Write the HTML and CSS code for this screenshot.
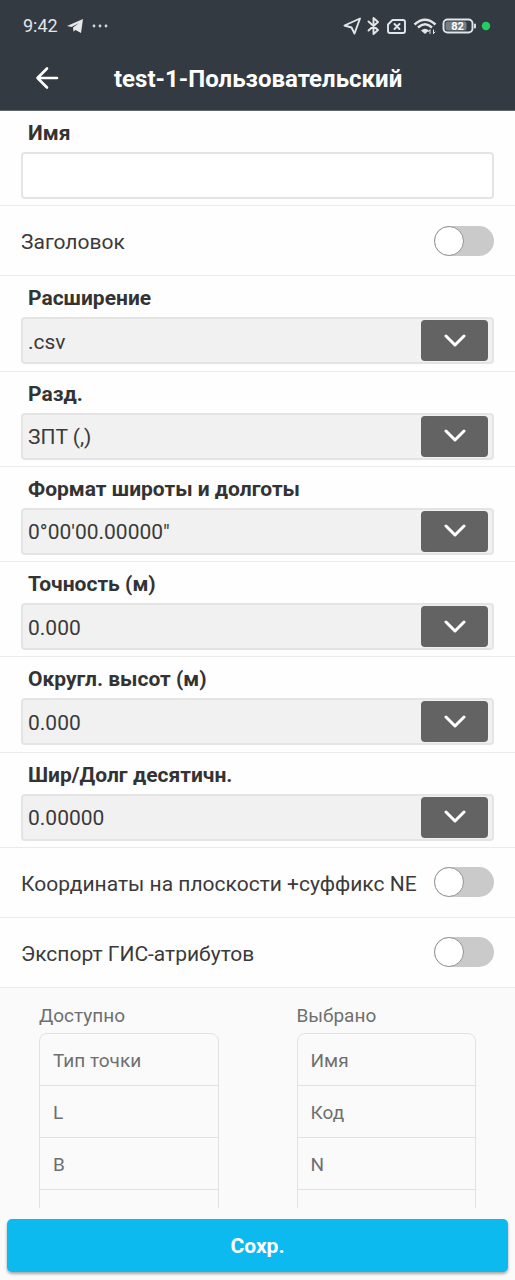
FILE: index.html
```html
<!DOCTYPE html>
<html lang="ru">
<head>
<meta charset="utf-8">
<meta name="viewport" content="width=device-width, initial-scale=1">
<title>test-1-Пользовательский</title>
<link rel="stylesheet" href="styles.css">
</head>
<body>
<div class="page">
  <header class="header">
    <div class="status">
      <div class="status-group">
        <span class="time">9:42</span>
        <svg width="16" height="14" viewBox="0 0 16 14"><path d="M0 7 16 0 14 14 8.500 11 6.500 12.500 6 8.500 12 4 4.500 8Z" fill="#e6e8ea"/></svg>
        <svg width="16" height="4" viewBox="0 0 16 4" fill="#d5d8dc"><circle cx="2" cy="2" r="1.400"/><circle cx="8" cy="2" r="1.400"/><circle cx="14" cy="2" r="1.400"/></svg>
      </div>
      <svg class="status-icons" width="148" height="20" viewBox="0 0 148 20" fill="none" stroke="#e3e6e9" stroke-width="1.900" stroke-linejoin="round" stroke-linecap="round">
        <path d="M1.500 9.500 17 2.500 11.500 17.500 8.500 11.500Z"/>
        <path d="M25.500 5.500 35 14 30.500 18V2l4.500 4-9.500 8.500"/>
        <path d="M49.500 4h10.500q2 0 2 2v9q0 2-2 2H47q-2 0-2-2V8.500Z"/>
        <path d="m51.500 8 5 5m0-5-5 5"/>
        <g stroke-width="2.400" stroke-linecap="butt"><path d="M71.500 8.500Q82-1 92.500 8.500M75 11.500q7-6.500 14 0"/></g>
        <path d="M78 14.500q4-3.500 8 0l-4 3.500Z" fill="#e3e6e9" stroke="none"/>
        <path d="M87 17.500v-3.500m-1.500 1.500 1.500-1.500M90.500 14v3.500m1.500-1.500-1.500 1.500" stroke-width="1"/>
        <rect x="100.500" y="3.500" width="29" height="13" rx="4"/>
        <rect x="102.500" y="5.500" width="21" height="9" rx="2" fill="#777d84" stroke="none"/>
        <path d="M132 8.500v3"/>
        <text x="114.500" y="14" text-anchor="middle" class="battery-text">82</text>
        <circle cx="143" cy="10" r="4.200" fill="#22cf62" stroke="none"/>
      </svg>
    </div>
    <div class="appbar">
      <button class="back" type="button" aria-label="Назад">
        <svg width="24" height="24" viewBox="0 0 24 24" fill="none" stroke="#fff" stroke-width="2.600" stroke-linecap="round" stroke-linejoin="round"><path d="M22 12H2.500M12 2.500 2.500 12l9.500 9.500"/></svg>
      </button>
      <h1 class="title">test-1-Пользовательский</h1>
    </div>
  </header>

  <form class="form" id="format">
    <div class="field">
      <label class="label" for="name">Имя</label>
      <input class="control" id="name" type="text">
    </div>
    <div class="toggle-row">
      <label for="header">Заголовок</label>
      <input class="switch" id="header" type="checkbox" role="switch">
    </div>
    <div class="field">
      <label class="label" for="ext">Расширение</label>
      <div class="picker"><select class="control" id="ext"><option>.csv</option></select><span class="arrow"><svg width="22" height="14" viewBox="0 0 22 14"><path d="m2 2 9 9 9-9"/></svg></span></div>
    </div>
    <div class="field">
      <label class="label" for="sep">Разд.</label>
      <div class="picker"><select class="control" id="sep"><option>ЗПТ (,)</option></select><span class="arrow"><svg width="22" height="14" viewBox="0 0 22 14"><path d="m2 2 9 9 9-9"/></svg></span></div>
    </div>
    <div class="field">
      <label class="label" for="angle">Формат широты и долготы</label>
      <div class="picker"><select class="control" id="angle"><option>0°00'00.00000"</option></select><span class="arrow"><svg width="22" height="14" viewBox="0 0 22 14"><path d="m2 2 9 9 9-9"/></svg></span></div>
    </div>
    <div class="field">
      <label class="label" for="precision">Точность (м)</label>
      <div class="picker"><select class="control" id="precision"><option>0.000</option></select><span class="arrow"><svg width="22" height="14" viewBox="0 0 22 14"><path d="m2 2 9 9 9-9"/></svg></span></div>
    </div>
    <div class="field">
      <label class="label" for="height">Округл. высот (м)</label>
      <div class="picker"><select class="control" id="height"><option>0.000</option></select><span class="arrow"><svg width="22" height="14" viewBox="0 0 22 14"><path d="m2 2 9 9 9-9"/></svg></span></div>
    </div>
    <div class="field">
      <label class="label" for="decimal">Шир/Долг десятичн.</label>
      <div class="picker"><select class="control" id="decimal"><option>0.00000</option></select><span class="arrow"><svg width="22" height="14" viewBox="0 0 22 14"><path d="m2 2 9 9 9-9"/></svg></span></div>
    </div>
    <div class="toggle-row">
      <label for="suffix">Координаты на плоскости +суффикс NE</label>
      <input class="switch" id="suffix" type="checkbox" role="switch">
    </div>
    <div class="toggle-row">
      <label for="gis">Экспорт ГИС-атрибутов</label>
      <input class="switch" id="gis" type="checkbox" role="switch">
    </div>
  </form>

  <div class="lists">
    <section class="column">
      <h2 class="column-title">Доступно</h2>
      <ul class="items"><li>Тип точки</li><li>L</li><li>B</li><li></li></ul>
    </section>
    <section class="column">
      <h2 class="column-title">Выбрано</h2>
      <ul class="items"><li>Имя</li><li>Код</li><li>N</li><li></li></ul>
    </section>
  </div>

  <footer class="footer">
    <button class="save" type="submit" form="format">Сохр.</button>
  </footer>
</div>
</body>
</html>
```
FILE: styles.css
```css
*,
*::before { box-sizing: border-box; }

body {
  margin: 0;
  background: #fafafa;
  color: #3a3a3a;
  font: 21px/24px Roboto, "Noto Sans", sans-serif;
}

.page {
  display: flex;
  flex-direction: column;
  min-height: 100vh;
}

.header {
  background: #343a42;
  border-bottom: 1px solid #62676e;
  color: #fff;
}

.status {
  display: flex;
  align-items: center;
  justify-content: space-between;
  height: 52px;
  padding: 0 23px;
}

.status-icons { margin-right: 1px; }

.status-group {
  display: flex;
  align-items: center;
  gap: 9px;
}

.time {
  color: #e3e6e9;
  font-size: 18px;
}

.battery-text {
  fill: #fff;
  stroke: none;
  font-size: 11px;
  font-weight: 700;
}

.appbar {
  display: flex;
  align-items: center;
  gap: 55px;
  height: 58px;
  padding: 0 35px 6px;
}

.back {
  display: flex;
  padding: 0;
  border: 0;
  background: none;
}

.title {
  margin: 0;
  padding-top: 2px;
  font-size: 24px;
  font-weight: 700;
}

.form {
  display: flex;
  flex: 1;
  flex-direction: column;
  background: #fefefe;
}

.field {
  display: flex;
  flex: 1 0 auto;
  flex-direction: column;
  padding: 10px 21px 6px;
  border-bottom: 1px solid #ebebeb;
}

.label {
  margin-bottom: 7px;
  padding-left: 7px;
  color: #333;
  font-weight: 700;
}

.control {
  width: 100%;
  height: 47px;
  padding: 2px 6px 0;
  border: 2px solid #e4e4e4;
  border-radius: 4px;
  background: #fff;
  color: inherit;
  font: inherit;
  appearance: none;
}

.picker { display: grid; }

.picker .control,
.arrow { grid-area: 1 / 1; }

.picker .control {
  padding: 2px 80px 0 5px;
  background: #f1f1f1;
}

.arrow {
  display: flex;
  align-items: center;
  justify-content: center;
  justify-self: end;
  align-self: center;
  width: 67px;
  height: 41px;
  margin-right: 6px;
  border-radius: 4px;
  background: #636363;
  pointer-events: none;
}

.arrow path {
  fill: none;
  stroke: #fff;
  stroke-width: 3;
  stroke-linecap: round;
  stroke-linejoin: round;
}

.toggle-row {
  display: flex;
  align-items: center;
  justify-content: space-between;
  min-height: 70px;
  padding: 0 21px;
  border-bottom: 1px solid #ebebeb;
}

.toggle-row label { padding-top: 3px; }

.switch {
  display: flex;
  flex: none;
  width: 60px;
  height: 30px;
  margin: 0;
  border-radius: 15px;
  background: #cacaca;
  appearance: none;
}

.switch::before {
  content: "";
  width: 30px;
  height: 30px;
  border: 1px solid #939393;
  border-radius: 50%;
  background: #fff;
}

.switch:checked {
  justify-content: flex-end;
  background: #0dbaf0;
}

.lists {
  display: grid;
  grid-template-columns: 1fr 1fr;
  height: 220px;
  overflow: hidden;
}

.column {
  padding: 16px 39px 0;
  color: #6f6f6f;
  font-size: 19px;
}

.column-title {
  margin: 0 0 5px;
  font-size: 19px;
  font-weight: 400;
}

.items {
  margin: 0;
  padding: 0;
  border: 1px solid #e2e2e2;
  border-radius: 8px;
  list-style: none;
}

.items li {
  height: 52px;
  padding: 15px 13px 0;
  border-bottom: 1px solid #e2e2e2;
}

.footer { padding: 11px 7px 8px; }

.save {
  width: 100%;
  height: 53px;
  border: 0;
  border-radius: 5px;
  background: #0dbaf0;
  box-shadow: 0 2px 3px #0005;
  color: #fff;
  font: 700 21px/24px Roboto, "Noto Sans", sans-serif;
}
```
